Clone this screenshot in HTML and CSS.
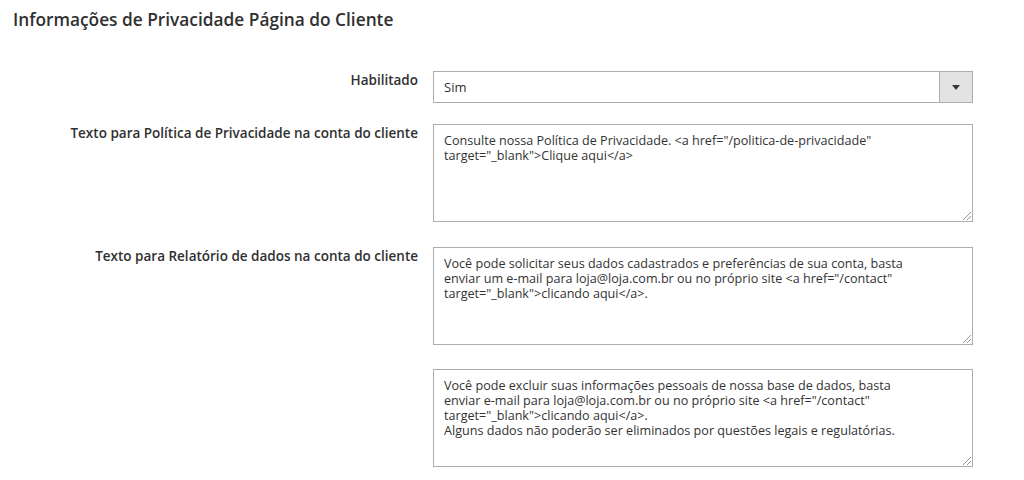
FILE: index.html
```html
<!DOCTYPE html>
<html lang="pt-BR">
<head>
<meta charset="utf-8">
<link rel="stylesheet" href="styles.css">
</head>
<body>
<div class="page">
  <h2 class="section-title">Informações de Privacidade Página do Cliente</h2>
  <div class="form">
    <div class="row row-select">
      <label class="label">Habilitado</label>
      <div class="control">
        <div class="select">
          <span class="select-value">Sim</span>
          <span class="select-btn"><span class="arrow"></span></span>
        </div>
      </div>
    </div>
    <div class="row">
      <label class="label">Texto para Política de Privacidade na conta do cliente</label>
      <div class="control">
        <div class="textarea">Consulte nossa Política de Privacidade. &lt;a href="/politica-de-privacidade"<br>target="_blank"&gt;Clique aqui&lt;/a&gt;<span class="grip"></span></div>
      </div>
    </div>
    <div class="row">
      <label class="label">Texto para Relatório de dados na conta do cliente</label>
      <div class="control">
        <div class="textarea">Você pode solicitar seus dados cadastrados e preferências de sua conta, basta<br>enviar um e-mail para loja@loja.com.br ou no próprio site &lt;a href="/contact"<br>target="_blank"&gt;clicando aqui&lt;/a&gt;.<span class="grip"></span></div>
      </div>
    </div>
    <div class="row row-last">
      <label class="label"></label>
      <div class="control">
        <div class="textarea">Você pode excluir suas informações pessoais de nossa base de dados, basta<br>enviar e-mail para loja@loja.com.br ou no próprio site &lt;a href="/contact"<br>target="_blank"&gt;clicando aqui&lt;/a&gt;.<br>Alguns dados não poderão ser eliminados por questões legais e regulatórias.<span class="grip"></span></div>
      </div>
    </div>
  </div>
</div>
</body>
</html>
```
FILE: styles.css
```css
html, body {
  margin: 0;
  padding: 0;
  background: #ffffff;
}
body {
  font-family: "Open Sans", "Noto Sans", sans-serif;
  color: #303030;
}
.page {
  padding: 9px 0 0 13px;
}
.section-title {
  margin: 0;
  font-size: 17.3px;
  font-weight: 600;
  line-height: 22px;
  color: #303030;
}
.form {
  display: flex;
  flex-direction: column;
  gap: 25px;
  margin-top: 40px;
}
.row {
  display: grid;
  grid-template-columns: 405px 540px;
  column-gap: 15px;
}
.row-select {
  margin-bottom: -4px;
}
.row-last {
  margin-top: -1px;
}
.label {
  text-align: right;
  font-size: 13.5px;
  font-weight: 600;
  line-height: 16px;
  padding-top: 1px;
  color: #303030;
}
.select {
  display: flex;
  height: 30px;
  border: 1px solid #adadad;
  background: #fff;
}
.select-value {
  flex: 1;
  padding-left: 10px;
  font-size: 13px;
  line-height: 30px;
  box-sizing: border-box;
}
.select-btn {
  width: 32px;
  border-left: 1px solid #adadad;
  background: #e3e3e3;
  display: flex;
  align-items: center;
  justify-content: center;
}
.arrow {
  width: 0;
  height: 0;
  border-left: 4px solid transparent;
  border-right: 4px solid transparent;
  border-top: 5px solid #41362f;
}
.textarea {
  position: relative;
  box-sizing: border-box;
  height: 98px;
  border: 1px solid #adadad;
  padding: 8px 10px;
  font-size: 12.6px;
  line-height: 15px;
  color: #333333;
  white-space: nowrap;
  overflow: hidden;
}
.grip {
  position: absolute;
  right: 1px;
  bottom: 1px;
  width: 8px;
  height: 8px;
  background: linear-gradient(135deg, transparent 45%, #999 45%, #999 55%, transparent 55%, transparent 70%, #999 70%, #999 80%, transparent 80%);
}
```
